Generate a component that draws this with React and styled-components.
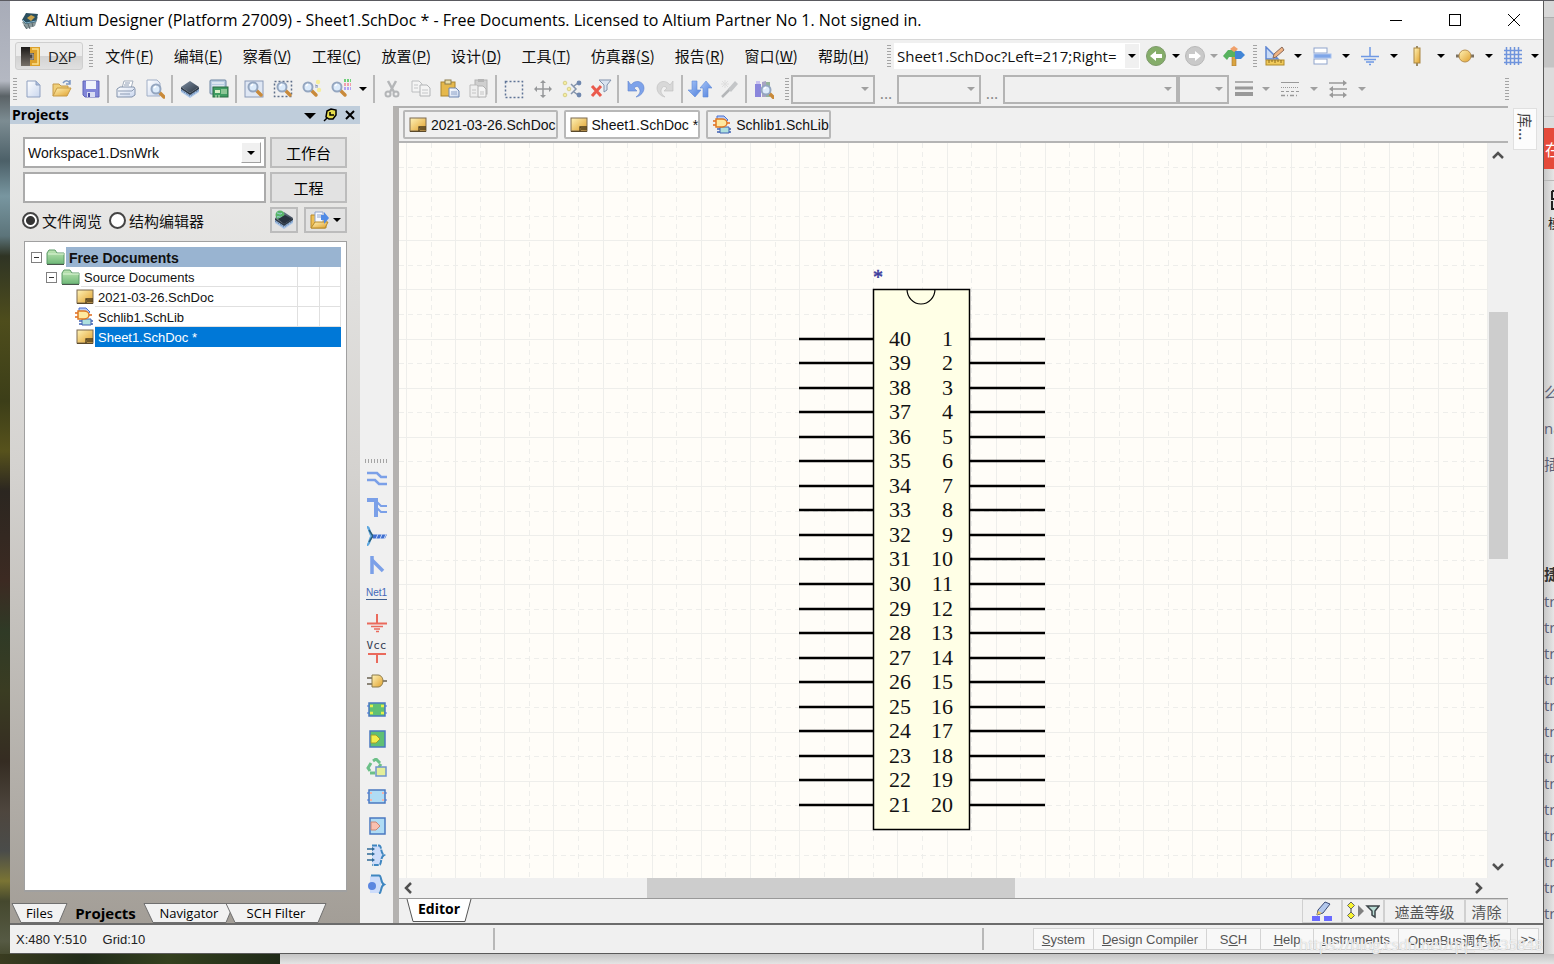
import React from "react";
import styled, { createGlobalStyle, css } from "styled-components";

const UI = '"Open Sans", "Noto Sans CJK SC", sans-serif';
const CJK = '"Noto Sans CJK SC", sans-serif';
const SANS = '"Liberation Sans", "Noto Sans CJK SC", sans-serif';

const GlobalStyle = createGlobalStyle`
  * { box-sizing: border-box; }
  body { margin: 0; background: #e6e6e6; font: 13px ${SANS}; color: #222; }
  button, input, select { font: inherit; color: inherit; margin: 0; border-radius: 0; }
  svg { display: block; flex: none; }
`;

/* ---------- icons ---------- */

const Svg = ({ w = 20, h = 20, children }) => (
  <svg width={w} height={h} viewBox={`0 0 ${w} ${h}`} fill="none" aria-hidden="true">
    {children}
  </svg>
);

const Defs = () => (
  <svg width="0" height="0" style={{ position: "absolute" }} aria-hidden="true">
    <defs>
      <linearGradient id="gold" x1="0" y1="0" x2="1" y2="1">
        <stop offset="0" stopColor="#fff3b8" /><stop offset="1" stopColor="#e0a02c" />
      </linearGradient>
      <linearGradient id="paper" x1="0" y1="0" x2="1" y2="1">
        <stop offset="0" stopColor="#ffffff" /><stop offset="1" stopColor="#c9d6ee" />
      </linearGradient>
      <linearGradient id="green" x1="0" y1="0" x2="0" y2="1">
        <stop offset="0" stopColor="#bfe6b4" /><stop offset="1" stopColor="#6fb878" />
      </linearGradient>
      <linearGradient id="blue" x1="0" y1="0" x2="1" y2="1">
        <stop offset="0" stopColor="#a9c6f7" /><stop offset="1" stopColor="#4f7fdc" />
      </linearGradient>
      <linearGradient id="chipTop" x1="0" y1="0" x2="1" y2="1">
        <stop offset="0" stopColor="#7d8ea2" /><stop offset="1" stopColor="#28323f" />
      </linearGradient>
      <linearGradient id="dark" x1="0" y1="0" x2="0" y2="1">
        <stop offset="0" stopColor="#1c1a18" /><stop offset="1" stopColor="#77716a" />
      </linearGradient>
    </defs>
  </svg>
);

const Lens = ({ x = 8, y = 8 }) => (
  <g>
    <path d={`M${x + 3} ${y + 3}l5 5`} stroke="#c98a3a" strokeWidth="3.5" strokeLinecap="round" />
    <circle cx={x} cy={y} r="4.5" fill="#dcebfb" stroke="#94a6c0" strokeWidth="2" />
    <path d={`M${x - 2} ${y - 1}l2-2`} stroke="#fff" strokeWidth="1.5" />
  </g>
);

const Chip = () => (
  <g>
    <path d="M1 9l9 6 9-6v4l-9 6-9-6z" fill="#a9c4e6" />
    <path d="M1 11l9 6 9-6" stroke="#5f7fa8" strokeDasharray="2 1" />
    <path d="M1 8l9-6 9 6-9 6z" fill="url(#chipTop)" />
    <path d="M1 8l9 6 9-6v2l-9 6-9-6z" fill="#2d3947" />
  </g>
);

const Sheet = () => (
  <Svg w={18} h={16}>
    <rect x="1" y="1" width="16" height="13" fill="url(#gold)" stroke="#7d6a50" />
    <path d="M10 14v-4h7M11 12h6" stroke="#4a3a1c" strokeWidth="1.3" />
    <path d="M1 14.5h16" stroke="#5b4a2c" />
  </Svg>
);

const Lib = () => (
  <Svg>
    <path d="M5 1h7l4 4-3 2H5z" fill="#b9cdf6" stroke="#4a6fce" />
    <path d="M1 6h3m-3 4h3m11-2h3" stroke="#e06a1c" strokeWidth="1.5" />
    <path d="M8 12h9v6H8z" fill="#aee0dd" stroke="#3f62b4" />
    <path d="M5 14h3m-3 3h3m9-3h2m-2 3h2" stroke="#3f62b4" strokeWidth="1.5" />
    <path d="M4 4h6c3 0 5 2 5 4s-2 4-5 4H4z" fill="#ffe9a0" stroke="#e07a22" strokeWidth="1.5" />
  </Svg>
);

const Folder = () => (
  <Svg w={19} h={18}>
    <path d="M1 16V5l2-3h6l2 3h7v11z" fill="url(#green)" stroke="#5c9a68" />
    <path d="M2 6h16" stroke="#def5d8" />
    <path d="M1 16.5h17" stroke="#49554c" />
  </Svg>
);

const icons = {
  app: <Svg><path d="M2 12l4 7 9-3 3-9z" fill="#8a9a9c" /><path d="M6 14l-4-4 4-7 12 1-2 8z" fill="#2b4f5f" /><path d="M4 15l3 4m1-5l2 5m2-6l1 4" stroke="#59656a" /><path d="M7 8l4-3 4 2-4 4z" fill="#c9a24a" /><path d="M3 10l3 3 10-2" stroke="#7fb0c8" /></Svg>,
  dxp: <Svg w={21} h={21}><path d="M10 1h10v19H10z" fill="#dca02a" /><path d="M12 3h6v15h-6" stroke="#fbe08a" strokeWidth="1.5" /><path d="M1 1h9v6h4v7h-4v6H1z" fill="url(#dark)" /><path d="M10 8h3v5h-3" stroke="#b8b0a4" strokeWidth="1.2" /></Svg>,
  new: <Svg><path d="M4 2h9l4 4v12H4z" fill="url(#paper)" stroke="#8fa0c0" /><path d="M13 2v4h4" fill="#a8badb" stroke="#8fa0c0" /></Svg>,
  open: <Svg><path d="M1 17V5h6l2 2h7v3" fill="#f0cf78" stroke="#c59a4a" /><path d="M1 17l4-8h14l-4 8z" fill="url(#gold)" stroke="#c79a45" /><path d="M11 4c2-3 5-3 7 0m0-3v4h-4" stroke="#7d98c4" strokeWidth="1.5" /></Svg>,
  save: <Svg><path d="M2 2h16v16H4l-2-2z" fill="#8186d8" stroke="#5f62b8" /><rect x="5" y="2" width="10" height="8" fill="#f0f3fb" /><rect x="6" y="13" width="8" height="5" fill="#d8dcf2" /><rect x="7" y="14" width="2" height="4" fill="#4a4ea8" /></Svg>,
  print: <Svg><path d="M6 9l2-7h9l-2 7z" fill="#fff" stroke="#a3aebd" /><path d="M1 10l3-2h14l1 2v6l-3 2H1z" fill="url(#paper)" stroke="#8292ab" /><path d="M2 12h14l2-2M4 15h10M9 4h5M8 6h5" stroke="#8c9bb3" /></Svg>,
  preview: <Svg><path d="M2 1h10l3 3v13H2z" fill="url(#paper)" stroke="#a0aec6" /><Lens x={11} y={10} /></Svg>,
  chip: <Svg><Chip /></Svg>,
  board: <Svg><rect x="1" y="1" width="16" height="14" rx="1" fill="#b9cde2" stroke="#6f87a3" /><path d="M3 4h12M3 7h12" stroke="#fff" /><rect x="4" y="8" width="15" height="10" fill="#3f9c62" stroke="#2a6b42" /><path d="M6 11h5v3H6z" fill="#d8efc8" /><path d="M13 10v5m2-5v5m2-5v5M7 16v3m3-3v3" stroke="#d8efc8" /></Svg>,
  zoomDoc: <Svg><rect x="1" y="2" width="18" height="16" fill="#dfe7f4" stroke="#8a9ab8" /><Lens x={9} y={8} /></Svg>,
  zoomSel: <Svg><rect x="1.5" y="2.5" width="17" height="15" stroke="#5f6f8a" strokeWidth="1.5" strokeDasharray="2 2" /><Lens x={9} y={8} /></Svg>,
  zoomYellow: <Svg><Lens x={6} y={8} /><circle cx="16" cy="3" r="2.2" fill="#f6ee9a" /><circle cx="17" cy="11" r="2.2" fill="#f6ee9a" /><path d="M13 6l3 1m-3 1h3" stroke="#8a9ab8" /></Svg>,
  zoomColor: <Svg><Lens x={6} y={8} /><path d="M13 1.500h7" stroke="#6fd07a" strokeWidth="3" strokeDasharray="2 1" /><path d="M13 5.500h7" stroke="#f0a0ac" strokeWidth="3" strokeDasharray="2 1" /><path d="M13 9.500h7" stroke="#b0a4f4" strokeWidth="3" strokeDasharray="2 1" /></Svg>,
  cut: <Svg><path d="M6 2l6 11M14 2L8 13" stroke="#b4b6b8" strokeWidth="2.5" /><circle cx="6" cy="15" r="2.5" stroke="#b4b6b8" strokeWidth="2" /><circle cx="14" cy="15" r="2.5" stroke="#b4b6b8" strokeWidth="2" /></Svg>,
  copy: <Svg><path d="M1 2h7l3 3v8H1z" fill="#f4f4f4" stroke="#bcbec0" /><path d="M9 6h7l3 3v8H9z" fill="#f4f4f4" stroke="#b2b4b6" /><path d="M3 6h4M3 9h4m4 2h6m-6 3h6" stroke="#c4c6c8" /></Svg>,
  paste: <Svg><rect x="1" y="3" width="14" height="14" fill="#e5b84c" stroke="#a8832e" /><rect x="5" y="1" width="6" height="4" fill="#e9dfae" stroke="#8a7a4a" /><path d="M9 9h7l3 3v6H9z" fill="url(#paper)" stroke="#6e86b0" /><path d="M11 13h6m-6 2h6" stroke="#8fa3c8" /></Svg>,
  pasteSpecial: <Svg><rect x="6" y="1" width="12" height="14" fill="#cfcfcf" stroke="#b2b2b2" /><path d="M9 0h6v3H9z" fill="#b5b5b5" /><path d="M1 6h7l3 3v9H1z" fill="#eee" stroke="#bbb" /><path d="M9 7h5l3 3v8H9z" fill="#f4f4f4" stroke="#b2b2b2" /><path d="M3 11h4m-4 3h4m4-1h4m-4 2h4" stroke="#c4c4c4" /></Svg>,
  select: <Svg><rect x="1.5" y="2.5" width="17" height="16" stroke="#5f7496" strokeWidth="1.5" strokeDasharray="2 2" /></Svg>,
  move: <Svg><path d="M10 3v14M3 10h14" stroke="#96989a" strokeWidth="1.5" /><path d="M10 1l3 3H7zM10 19l3-3H7zM1 10l3-3v6zM19 10l-3-3v6z" fill="#96989a" /></Svg>,
  deselect: <Svg><path d="M9 5l5 5-5 5M12 7l4-3M12 13l4 3" stroke="#8494ac" strokeWidth="1.5" /><g fill="#f4eda0" stroke="#d8d08a"><circle cx="3" cy="4" r="1.8" /><circle cx="7" cy="10" r="1.8" /><circle cx="3" cy="16" r="1.8" /></g><g fill="#6f87ae"><circle cx="17" cy="4" r="2.4" /><circle cx="17" cy="16" r="2.4" /></g></Svg>,
  clear: <Svg w={22}><path d="M2 7l9 10M11 7L2 17" stroke="#ea5a4c" strokeWidth="3" /><path d="M9 1h12l-4 5v5l-3 2V6z" fill="#dbe4f0" stroke="#8292ac" /></Svg>,
  undo: <Svg><path d="M5 6c4-6 13-4 13 3 0 4-3 8-8 9 4-3 5-6 3-9-1-2-3-2-5 0l3 3H2V2z" fill="#7da2ea" stroke="#5f83cc" strokeWidth=".6" /></Svg>,
  redo: <Svg><path d="M15 6C11 0 2 2 2 9c0 4 3 8 8 9-4-3-5-6-3-9 1-2 3-2 5 0l-3 3h9V2z" fill="#d8d8d8" stroke="#bdbdbd" strokeWidth=".6" /></Svg>,
  upDown: <Svg w={24}><path d="M4 2h5v9h4l-6 7-7-7h4z" fill="url(#blue)" stroke="#5f8ad8" strokeWidth=".6" /><path d="M15 18h5V9h4l-6-7-6 7h3z" fill="url(#blue)" stroke="#5f8ad8" strokeWidth=".6" /></Svg>,
  wand: <Svg><path d="M3 18L12 9" stroke="#b4b6b8" strokeWidth="2.5" /><path d="M9 10l7-8 3 3-7 8z" fill="#c4c6c8" /><path d="M6 1v8M2 5h8M3 2l6 6M9 2L3 8" stroke="#dedede" /></Svg>,
  books: <Svg><path d="M1 5h6v13H1z" fill="#8a86dc" /><path d="M2 2h4v3H2z" fill="#c9c2f0" /><path d="M8 3l4-1v16H8z" fill="#a8a4c4" /><path d="M12 3h4v15h-4z" fill="#94b49a" /><Lens x={12} y={11} /></Svg>,
  width: <Svg><path d="M1 3h18" stroke="#999" strokeWidth="1.5" /><path d="M1 9h18" stroke="#999" strokeWidth="3" /><path d="M1 15h18" stroke="#999" strokeWidth="4" /></Svg>,
  style: <Svg><path d="M1 3.500h18" stroke="#999" /><path d="M1 8.500h18" stroke="#999" strokeDasharray="1 1" /><path d="M1 12.500h18" stroke="#999" strokeDasharray="3 2" /><path d="M1 16.500h18" stroke="#999" strokeDasharray="4 2 1 2" strokeWidth="1.5" /></Svg>,
  arrows: <Svg><path d="M1 4h15M4 10h15M3 16h14" stroke="#999" strokeWidth="1.5" /><path d="M15 1l4 3-4 3zM5 7l-4 3 4 3zM5 13l-4 3 4 3zM15 13l4 3-4 3z" fill="#999" /></Svg>,
  back: <Svg><circle cx="10" cy="10" r="9.5" fill="#85ad6a" stroke="#7d9a6a" /><path d="M4 10l6-5v3h6v4h-6v3z" fill="#fff" /></Svg>,
  forward: <Svg><circle cx="10" cy="10" r="9.5" fill="#c9c9c9" stroke="#b8b8b8" /><path d="M16 10l-6-5v3H4v4h6v3z" fill="#fff" /></Svg>,
  tree: <Svg w={22}><path d="M9 4h4v16H9z" fill="#d9a441" stroke="#a9772c" strokeWidth=".6" /><path d="M0 10l5-6h7v7H6l-2 3z" fill="#57b25e" /><path d="M22 9l-4-4h-6v8h6z" fill="#4185d6" /><path d="M7 3l4-3 4 3-4 3z" fill="#f0a06a" /></Svg>,
  ruler: <Svg><path d="M1 1l12 12H1z" fill="#c8daf6" stroke="#5f86d2" strokeWidth="1.5" /><path d="M8 12l1-4 8-7 2 3-8 7z" fill="#f0b484" stroke="#8a6a5a" /><rect x="1" y="14" width="18" height="5" fill="#f0c95a" stroke="#b08a2a" /><path d="M4 14v3m3-3v2m3-2v3m3-3v2m3-2v3" stroke="#8a6a1c" /></Svg>,
  align: <Svg><rect x="2" y="2" width="13" height="5" fill="#fff" stroke="#8fa4cc" /><rect x="2" y="13" width="13" height="5" fill="#fff" stroke="#8fa4cc" /><rect x="2" y="8" width="17" height="4" fill="#7fa6e8" stroke="#a9c2ee" /></Svg>,
  ground: <Svg><path d="M10 1v9M1 10.500h18M4 13.500h12M6 16h8M9 18.500h2" stroke="#6e98e4" strokeWidth="1.5" /></Svg>,
  resistor: <Svg><path d="M10 0v20" stroke="#7d6a3a" strokeWidth="1.5" /><rect x="7" y="2" width="6" height="15" fill="url(#gold)" stroke="#a98642" /></Svg>,
  node: <Svg><path d="M1 10h18" stroke="#7a7060" strokeWidth="3" /><circle cx="10" cy="10" r="6" fill="url(#gold)" stroke="#b89050" /></Svg>,
  grid: <Svg><path d="M3.500 1v18M7.500 1v18M11.500 1v18M15.500 1v18M1 4.500h18M1 8.500h18M1 12.500h18M1 16.500h18" stroke="#6f94dc" strokeWidth="1.5" /></Svg>,
  pin: <Svg w={14} h={14}><path d="M1 13l4-4" stroke="#000" strokeWidth="1.5" /><path d="M4 3l4-2 5 1v5l-3 4H6L3 9z" fill="#e6dc4c" stroke="#000" strokeWidth="1.5" /><path d="M7 4v3h4" stroke="#000" strokeWidth="1.5" /></Svg>,
  close: <Svg w={12} h={12}><path d="M2 2l8 8M10 2l-8 8" stroke="#000" strokeWidth="2" /></Svg>,
  chipGlobe: <Svg><Chip /><circle cx="6" cy="5" r="4.5" fill="#58b468" /><path d="M3 3c2 0 3 2 5 0M3 7c2-1 3 1 5 0" stroke="#a8d4f0" /><path d="M4 9l7-4 7 4-8 5z" fill="#28323f" /></Svg>,
  folderDoc: <Svg><path d="M1 18V5h5l2 2h8v11z" fill="#eebf55" stroke="#b88a2a" /><path d="M5 2h8v11H5z" fill="#f6f9ff" stroke="#8fa4cc" /><path d="M7 5h5M7 7h5" stroke="#8fa4cc" /><path d="M1 18l4-6h13l-3 6z" fill="url(#gold)" stroke="#b88a2a" /><path d="M11 5h3V2l5 6-5 6v-4h-3z" fill="#4f8ae6" /></Svg>,
  wire: <Svg w={22}><path d="M1 5h10l4 4h6M1 12h8l4 4h8" stroke="#7ba0e8" strokeWidth="2.5" /></Svg>,
  bus: <Svg w={22}><path d="M1 3h9v17" stroke="#7ba0e8" strokeWidth="4" /><path d="M11 5l4 4h6M11 11l4 4h6" stroke="#7ba0e8" strokeWidth="2" /></Svg>,
  harness: <Svg w={22}><path d="M1 1c3 0 2 7 5 9-3 2-2 9-5 9" stroke="#5fa8e0" strokeWidth="2.5" /><path d="M3 4l4 6-4 6" stroke="#2b5f7a" strokeWidth="1.5" /><path d="M7 8.500h14l-2 4H7z" fill="#3f6fd0" /><path d="M12 8l-2 5m6-5l-2 5m6-5l-2 5" stroke="#c8d8f8" /></Svg>,
  busEntry: <Svg w={22}><path d="M6 1v18" stroke="#7ba0e8" strokeWidth="3.500" /><path d="M6 5l11 11" stroke="#7ba0e8" strokeWidth="3.500" /></Svg>,
  gnd: <Svg w={22}><path d="M11 1v9M1 10.500h20" stroke="#ea6a5c" strokeWidth="2" /><path d="M5 13.500h12M8 16h6M10 18.500h3" stroke="#ea6a5c" strokeWidth="1.5" /></Svg>,
  part: <Svg w={22}><path d="M1 7h6M1 13h6M15 10h6" stroke="#6a6250" strokeWidth="1.5" /><path d="M6 4h6c3 0 5 3 5 6s-2 6-5 6H6z" fill="url(#gold)" stroke="#8a7a4c" /></Svg>,
  sheetSym: <Svg w={22}><path d="M1 6h20M1 13h20" stroke="#7c9be8" strokeWidth="1.5" /><rect x="3" y="3" width="16" height="13" fill="#5fc074" stroke="#4a78c0" strokeWidth="1.5" /><path d="M4 6h3M4 13h3m8-7h3m-3 7h3" stroke="#e6ee4c" strokeWidth="2.5" /></Svg>,
  sheetEntry: <Svg w={22}><rect x="4" y="2" width="15" height="16" fill="#5fc074" stroke="#4a78c0" strokeWidth="1.5" /><path d="M5 6h5l4 4-4 4H5z" fill="#f2ee4c" stroke="#a0a02c" /></Svg>,
  recycle: <Svg w={22}><path d="M4 13l-2-3 3-5M7 3l3-2 4 4M13 9l2-3" stroke="#6cc088" strokeWidth="3" /><path d="M4 15h5" stroke="#6cc088" strokeWidth="3" /><rect x="10" y="9" width="10" height="9" fill="#e4ee9a" stroke="#6e94cc" strokeWidth="1.5" /></Svg>,
  device: <Svg w={22}><path d="M1 6h20M1 13h20" stroke="#7c9be8" strokeWidth="1.5" /><rect x="3" y="3" width="16" height="13" fill="#b0dcf4" stroke="#4a78c0" strokeWidth="1.5" /><path d="M4 6h2M4 13h2m10-7h2m-2 7h2" stroke="#f4b4a8" strokeWidth="2" /></Svg>,
  port: <Svg w={22}><rect x="4" y="2" width="15" height="16" fill="#b0dcf4" stroke="#4a78c0" strokeWidth="1.5" /><path d="M5 6h5l4 4-4 4H5z" fill="#f9c0b0" stroke="#c88878" /></Svg>,
  connector: <Svg w={22} h={22}><path d="M6 2h8l2 8-2 10H6z" fill="#cddcfa" /><path d="M1 5h6M1 10h6M1 16h6" stroke="#2f6a98" strokeWidth="1.5" /><path d="M6 3l3 2-3 2zM6 8l3 2-3 2zM6 14l3 2-3 2z" fill="#2f6a98" /><path d="M6 1.500h7c3 0 1 7 5 9.500-4 2-2 10-5 10H6" stroke="#3f86c0" strokeWidth="2" strokeDasharray="5 1" /></Svg>,
  connEntry: <Svg w={22}><path d="M4 2h9l2 8-2 9H4z" fill="#cddcfa" /><path d="M5 1.500h8c3 0 1 7 5 9-4 2-2 8-5 9" stroke="#3f86c0" strokeWidth="2" /><circle cx="6" cy="12" r="4" fill="#5a86e0" /></Svg>,
  pencil: <Svg w={22}><path d="M7 9l7-8 5 2-7 9-6 2z" fill="#b4c8ec" stroke="#3c4c78" /><path d="M6 14l1-4 4 2z" fill="#f0d060" /><path d="M1 15h8v5H1zM13 15h8v5h-8z" fill="#6a6aff" /></Svg>,
  mask: <Svg w={34}><path d="M5 6v8" stroke="#444" /><path d="M5 1l3.500 3.500L5 8 1.500 4.500zM5 11l3.500 3.500L5 18l-3.500-3.500z" fill="#f8f430" stroke="#666" /><path d="M12 4l6 6-6 6z" fill="#808080" /><path d="M21 5h12l-4 5v6l-3-2v-4z" fill="#b8dcd4" stroke="#3c4448" strokeWidth="1.5" /></Svg>,
};

const Caret = styled.span`
  flex: none;
  width: 0;
  height: 0;
  border: 4px solid transparent;
  border-top-color: ${(p) => (p.$muted ? "#a0a0a0" : "#000")};
  border-bottom-width: 0;
`;

/* ---------- desktop behind the window ---------- */

const Desktop = styled.div`
  display: grid;
  grid-template-columns: 10px minmax(0, 1fr) 10px;
  grid-template-rows: 1fr 10px;
  min-height: 100vh;
  padding-top: 1px;
  overflow: hidden;
  background: #5a5a60;
`;

const Wallpaper = styled.div`
  background: linear-gradient(
    #a8acb8 0, #b4b8c2 80px, #5a6266 95px, #7c8c92 120px, #4c6068 160px,
    #7896a0 195px, #5c747a 235px, #2f3424 255px, #4e4d1c 320px, #3c3e18 400px,
    #57521c 450px, #2b2620 490px, #3c2a22 580px, #2f3a26 630px, #3a3c22 690px,
    #352c22 760px, #4e463e 810px, #4a4c4a 850px, #7a7434 880px, #45482e 900px,
    #565a44 940px, #3c4022 963px
  );
`;

const DesktopFoot = styled.div`
  grid-column: 1 / -1;
  display: flex;
  background: linear-gradient(#c4c4c4, #e4e4e4);
`;

const FootImage = styled.div`
  width: 280px;
  background: linear-gradient(90deg, #3a3c20, #222c1a 30%, #34401e 60%, #202a18);
`;

const Behind = styled.aside`
  overflow: hidden;
  background: linear-gradient(90deg, #c8c8c8, #e6e6e6);
  font: 15px ${UI};
  color: #5c6076;
  white-space: nowrap;
`;

const BehindTop = styled.div`
  height: 127px;
  background: linear-gradient(#d8d8d8 16px, #999 16px, #c4c4c4 17px, #c4c4c4 66px, #dcdcdc 67px, #dcdcdc 115px, #b8b8b8 115px, #dcdcdc 116px);
`;

const BehindButton = styled.button`
  display: block;
  width: 40px;
  height: 41px;
  border: 0;
  padding: 0 1px;
  background: #e54a3a;
  color: #fff;
  font: 16px ${CJK};
  text-align: left;
`;

const BehindTool = styled.div`
  height: 194px;
  margin-top: 11px;
  padding: 8px 0 0 4px;
  border-top: 1px solid #b8b8b8;
  color: #222;
  font: 13px ${CJK};
`;

const BehindLink = styled.a`
  display: block;
  height: ${(p) => p.$h}px;
  line-height: ${(p) => p.$h}px;
  color: ${(p) => (p.$bold ? "#333" : "#5c6076")};
  font-weight: ${(p) => (p.$bold ? 700 : 400)};
  text-decoration: none;
`;

/* ---------- window ---------- */

const Window = styled.main`
  position: relative;
  display: flex;
  flex-direction: column;
  background: #f0f0f0;
  border-right: 1px solid #5a5a5a;
  border-bottom: 1px solid #5a5a5a;
`;

const TitleBar = styled.header`
  display: flex;
  align-items: center;
  gap: 5px;
  height: 39px;
  padding: 0 2px 0 10px;
  background: #fff;
  border-bottom: 1px solid #d8d8d8;
`;

const Title = styled.h1`
  flex: 1;
  margin: 0;
  font: 400 16px ${UI};
  color: #000;
  white-space: nowrap;
`;

const CaptionButton = styled.button`
  display: flex;
  align-items: center;
  justify-content: center;
  width: 54px;
  height: 38px;
  padding: 0;
  border: 0;
  background: none;
`;

const Row = styled.div`
  display: flex;
  align-items: center;
  height: 33px;
  padding: 0 0 1px 3px;
`;

const Grip = styled.span`
  flex: none;
  width: ${(p) => (p.$wide ? 23 : 4)}px;
  height: ${(p) => (p.$wide ? 4 : 22)}px;
  margin: ${(p) => p.$m || "0"};
  background: repeating-linear-gradient(${(p) => (p.$wide ? "90deg" : "180deg")}, #a4a4a4 0 1px, #f0f0f0 1px 3px);
`;

const DxpButton = styled.button`
  display: flex;
  align-items: center;
  gap: 7px;
  width: 73px;
  height: 28px;
  margin-left: 2px;
  padding: 0 4px;
  border: 1px solid #cfcfcf;
  border-radius: 3px;
  background: linear-gradient(#ececec 50%, #d2d2d2 50%, #e0e0e0);
  font: 15px ${UI};
`;

const MenuButton = styled.button`
  padding: 0 10px;
  border: 0;
  background: none;
  font: 15px/24px ${CJK};
  color: #111;
  white-space: nowrap;
`;

const AddressWrap = styled.span`
  position: relative;
  flex: none;
  width: 246px;
  height: 26px;
`;

const PlainSelect = styled.select`
  width: 100%;
  height: 100%;
  appearance: none;
  border: ${(p) => (p.$line ? `2px solid ${p.$line}` : "0")};
  padding: 0 18px 0 3px;
  background: ${(p) => p.$bg || "#fff"};
  font: ${(p) => p.$size || 15}px ${(p) => (p.$sans ? SANS : UI)};
  color: #111;
  opacity: 1;
`;

const SelectCaret = styled.span`
  position: absolute;
  top: ${(p) => p.$inset || 1}px;
  right: ${(p) => p.$inset || 1}px;
  bottom: ${(p) => p.$inset || 1}px;
  display: flex;
  align-items: center;
  justify-content: center;
  width: ${(p) => (p.$raised ? 20 : 14)}px;
  background: #f0f0f0;
  pointer-events: none;
  ${(p) => p.$raised && css`border: 1px solid; border-color: #fff #a0a0a0 #a0a0a0 #fff; background: #f0f0f0;`}
`;

const ToolButton = styled.button`
  display: flex;
  flex: none;
  align-items: center;
  justify-content: center;
  width: ${(p) => p.$w || 29}px;
  height: 28px;
  padding: 0;
  border: 0;
  background: none;
`;

const Separator = styled.span`
  flex: none;
  width: 2px;
  height: 28px;
  margin: 0 2px;
  background: #b8b8b8;
`;

const Dots = styled.span`
  width: 22px;
  align-self: flex-end;
  padding-bottom: 2px;
  text-align: center;
  color: #888;
  font: 16px/20px ${UI};
`;

const ComboWrap = styled.span`
  position: relative;
  flex: none;
  width: ${(p) => p.$w}px;
  height: 29px;
`;

const Spring = styled.span`
  flex: ${(p) => p.$grow || 1};
`;

const Body = styled.div`
  display: flex;
  flex: 1;
  min-height: 0;
`;

/* ---------- projects panel ---------- */

const Panel = styled.section`
  display: flex;
  flex: none;
  flex-direction: column;
  width: 350px;
  background: linear-gradient(#eeeeed, #d4d2cf 45%, #a39e97);
`;

const PanelHead = styled.header`
  display: flex;
  align-items: center;
  gap: 7px;
  height: 18px;
  padding: 0 4px 0 2px;
  background: #bfcddb;
`;

const PanelTitle = styled.h2`
  flex: 1;
  margin: 0;
  font: 700 14px/18px ${UI};
  color: #000;
`;

const IconButton = styled.button`
  display: flex;
  padding: 0;
  border: 0;
  background: none;
`;

const PanelForm = styled.div`
  display: grid;
  grid-template-columns: minmax(0, 1fr) 77px;
  gap: 4px;
  padding: 13px 13px 0;
`;

const FieldWrap = styled.span`
  position: relative;
  height: 31px;
`;

const TextField = styled.input`
  width: 100%;
  height: 31px;
  border: 2px solid #ababab;
  padding: 0 4px;
  background: #fff;
`;

const PushButton = styled.button`
  display: flex;
  align-items: center;
  justify-content: center;
  gap: 3px;
  width: ${(p) => (p.$w ? `${p.$w}px` : "auto")};
  height: ${(p) => p.$h || 31}px;
  padding: 0;
  border: 2px solid #bcbcbc;
  background: #e2e2e2;
  font: 15px ${CJK};
  color: #000;
`;

const ViewRow = styled.div`
  display: flex;
  align-items: center;
  gap: 6px;
  height: 26px;
  margin: 4px 13px 8px 12px;
`;

const RadioLabel = styled.label`
  display: flex;
  align-items: center;
  gap: 3px;
  margin-right: 1px;
  font: 15px ${CJK};
  color: #111;
`;

const Radio = styled.input`
  appearance: none;
  width: 17px;
  height: 17px;
  margin: 0;
  border: 2px solid #444;
  border-radius: 50%;
  background: #fff;
  &:checked {
    background: radial-gradient(#333 0 4px, #fff 5px);
  }
`;

const Tree = styled.ul`
  flex: 1;
  min-height: 200px;
  margin: 0 13px 0 14px;
  padding: 5px 5px 0 6px;
  border: 2px solid #a0a0a0;
  border-width: 1px 1px 2px 1px;
  background: #fff;
  list-style: none;
`;

const TreeRow = styled.li`
  display: flex;
  align-items: center;
  height: 20px;
  padding-left: ${(p) => p.$indent}px;
  svg { margin-right: 1px; }
`;

const TreeLabel = styled.span`
  display: flex;
  flex: 1;
  height: 20px;
  padding-left: 3px;
  line-height: 22px;
  font-size: ${(p) => (p.$kind === "root" ? 14 : 13)}px;
  font-weight: ${(p) => (p.$kind === "root" ? 700 : 400)};
  color: ${(p) => (p.$kind === "selected" ? "#fff" : "#111")};
  background: ${(p) => ({ root: "#99b4d1", selected: "#0078d7" }[p.$kind] || "none")};
  border-bottom: ${(p) => (p.$kind ? "0" : "1px solid #e0e0e0")};
`;

const TreeCell = styled.span`
  width: 22px;
  border: solid #e0e0e0;
  border-width: 0 0 0 1px;
  &:last-child { border-right-width: 1px; }
`;

const Expander = styled.button`
  position: relative;
  width: 11px;
  height: 11px;
  margin-right: 4px;
  padding: 0;
  border: 1px solid #808080;
  background: linear-gradient(#333, #333) center / 5px 1px no-repeat #fff;
`;

const PanelTabs = styled.nav`
  display: flex;
  height: 20px;
  margin-top: 11px;
  padding-left: 1px;
`;

const SlantTab = styled.button`
  position: relative;
  width: ${(p) => p.$w}px;
  height: 20px;
  margin-right: -10px;
  padding: 0;
  border: 0;
  background: none;
  font: ${(p) => (p.$active ? 700 : 400)} ${(p) => p.$size || 13}px/18px ${UI};
  color: #000;
  svg { position: absolute; inset: 0; }
  span { position: relative; }
`;

/* ---------- wiring strip ---------- */

const WiringBar = styled.div`
  display: flex;
  flex: none;
  flex-direction: column;
  align-items: center;
  justify-content: flex-end;
  width: 33px;
  padding-bottom: 25px;
`;

const WiringButton = styled.button`
  display: flex;
  flex: none;
  align-items: center;
  justify-content: center;
  width: 30px;
  height: 29px;
  padding: 0;
  border: 0;
  background: none;
`;

const NetLabel = styled.span`
  border-bottom: 1px solid #3f5f90;
  font: 10px/12px ${SANS};
  color: #4468b8;
`;

const VccLabel = styled.span`
  display: flex;
  flex-direction: column;
  align-items: center;
  font: 11px/12px "DejaVu Sans Mono", monospace;
  color: #333a50;
`;

/* ---------- document area ---------- */

const Documents = styled.section`
  display: flex;
  flex: 1;
  flex-direction: column;
  min-width: 0;
  border-left: 6px solid #b4b2b0;
  border-top: 2px solid #b0b0b0;
`;

const DocTabs = styled.nav`
  display: flex;
  align-items: center;
  gap: 6px;
  height: 35px;
  padding-left: 4px;
  border-bottom: 2px solid #b4b4b4;
`;

const DocTab = styled.button`
  display: flex;
  flex: none;
  align-items: center;
  gap: 4px;
  height: 29px;
  padding: 0 0 0 4px;
  border: 2px solid #b8b8b8;
  border-radius: 2px;
  background: ${(p) => (p.$active ? "#fff" : "#f0f0f0")};
  font: 14px ${SANS};
  color: #111;
  white-space: nowrap;
`;

const CanvasRow = styled.div`
  display: flex;
  flex: 1;
`;

const Canvas = styled.svg`
  flex: 1;
  min-width: 0;
  min-height: 700px;
  height: auto;
  background: #fffdf8;
`;

const ScrollBar = styled.div`
  display: flex;
  flex: none;
  flex-direction: ${(p) => (p.$horizontal ? "row" : "column")};
  ${(p) => (p.$horizontal ? "height: 20px; margin-right: 20px;" : "width: 20px; padding: 2px 0;")}
`;

const ScrollButton = styled.button`
  display: flex;
  align-items: center;
  justify-content: center;
  width: 20px;
  height: 20px;
  padding: 0;
  border: 0;
  background: none;
`;

const Thumb = styled.span`
  flex: ${(p) => p.$grow};
  margin: ${(p) => (p.$horizontal ? "0" : "0 0 0 1px")};
  background: #cdcdcd;
`;

const EditorRow = styled.div`
  display: flex;
  height: 25px;
  padding-left: 7px;
  border-top: 1px solid #999;
`;

const MaskButton = styled.button`
  display: flex;
  align-items: center;
  justify-content: center;
  width: ${(p) => p.$w}px;
  height: 24px;
  padding: 0;
  border: 1px solid #d0d0d0;
  background: #f0f0f0;
  font: 15px ${CJK};
  color: #555;
`;

const SideStrip = styled.aside`
  flex: none;
  width: 35px;
  padding: 2px 5px;
`;

const SideTab = styled.button`
  width: 24px;
  height: 42px;
  padding: 4px 0;
  border: 1px solid #e0e0e0;
  background: #fcfcfc;
  font: 15px/22px ${CJK};
  color: #444;
  writing-mode: vertical-rl;
  text-orientation: sideways;
  text-align: left;
`;

/* ---------- status bar ---------- */

const StatusBar = styled.footer`
  display: flex;
  align-items: center;
  height: 30px;
  padding: 0 4px 0 6px;
  border-top: 2px solid #6c6c6c;
  color: #222;
`;

const StatusText = styled.span`
  margin-right: 16px;
  font-size: 13px;
  white-space: pre;
`;

const StatusRule = styled.span`
  width: 2px;
  height: 22px;
  margin-right: ${(p) => p.$gap}px;
  background: #b8b8b8;
`;

const StatusButton = styled.button`
  width: ${(p) => p.$w}px;
  height: 22px;
  margin-left: ${(p) => (p.$apart ? 6 : -1)}px;
  padding: 0;
  border: 1px solid #d4d4d4;
  background: #f8f8f8;
  color: #555;
  font-size: 13px;
  white-space: nowrap;
`;

const Watermark = styled.span`
  position: absolute;
  right: 0;
  bottom: 0;
  font: 15px/18px ${UI};
  color: rgba(255, 255, 255, 0.8);
  text-shadow: 0 0 1px #aaa;
  pointer-events: none;
`;

/* ---------- data ---------- */

const menus = [
  ["文件", "F"], ["编辑", "E"], ["察看", "V"], ["工程", "C"], ["放置", "P"], ["设计", "D"],
  ["工具", "T"], ["仿真器", "S"], ["报告", "R"], ["窗口", "W"], ["帮助", "H"],
];

const tools = [
  "new", "open", "save", "|", "print", "preview", "|", "chip", "board", "|",
  "zoomDoc", "zoomSel", "zoomYellow", "zoomColor", "v", "|", "cut", "copy", "paste", "pasteSpecial", "|",
  "select", "move", "deselect", "clear", "|", "undo", "redo", "|", "upDown", "wand", "|", "books",
];

const wiring = [
  "wire", "bus", "harness", "busEntry", "net", "gnd", "vcc", "part",
  "sheetSym", "sheetEntry", "recycle", "device", "port", "connector", "connEntry",
];

const panelTabs = [
  { name: "Files", w: 57 }, { name: "Projects", w: 95, active: true },
  { name: "Navigator", w: 92 }, { name: "SCH Filter", w: 102 },
];

const statusButtons = [
  ["", "S", "ystem", 61], ["", "D", "esign Compiler", 114], ["S", "C", "H", 55],
  ["", "H", "elp", 54], ["", "I", "nstruments", 86],
];

const GRID = 49.14;

function Schematic() {
  const lines = Array.from({ length: 120 }, (_, i) => i);
  const pins = Array.from({ length: 20 }, (_, i) => i);
  return (
    <Canvas role="img" aria-label="Schematic sheet">
      {lines.map((i) => {
        const x = Math.round(7 + (i * GRID) / 2) + 0.5;
        const y = Math.round((i * GRID) / 2) - 0.5;
        const dash = i % 2 === 1 ? "5 4" : undefined;
        return (
          <g key={i} stroke="#eeeeeb">
            <line x1={x} y1="0" x2={x} y2="100%" strokeDasharray={dash} />
            <line x1="0" y1={y} x2="100%" y2={y} strokeDasharray={dash} />
          </g>
        );
      })}
      <rect x="474.5" y="146.5" width="96" height="540" fill="#ffffe6" stroke="#000" strokeWidth="1.5" />
      <path d="M508 146a14 15 0 0 0 28 0" fill="none" stroke="#000" strokeWidth="1.2" />
      <g fontFamily='"Liberation Serif", serif' fontSize="22" fill="#111">
        {pins.map((i) => {
          const y = Math.round(195.5 + i * 24.55);
          return (
            <g key={i}>
              <path d={`M400 ${y}H474M571 ${y}H646`} stroke="#000" strokeWidth="2.5" />
              <text x="490" y={y + 7}>{40 - i}</text>
              <text x="554" y={y + 7} textAnchor="end">{i + 1}</text>
            </g>
          );
        })}
      </g>
      <text x="474" y="141" fontFamily='"Liberation Serif", serif' fontSize="20" fill="#3c3c9c" stroke="#3c3c9c" strokeWidth=".5">*</text>
    </Canvas>
  );
}

const arrowPaths = {
  up: "M1 9l5-5 5 5", down: "M1 4l5 5 5-5", left: "M8 1L3 6l5 5", right: "M4 1l5 5-5 5",
};
const Arrow = ({ dir }) => (
  <ScrollButton aria-label={`Scroll ${dir}`}>
    <Svg w={12} h={12}><path d={arrowPaths[dir]} stroke="#505050" strokeWidth="2.5" /></Svg>
  </ScrollButton>
);

const Combo = ({ w, label }) => (
  <ComboWrap $w={w}>
    <PlainSelect $line="#b4b4b4" $bg="#f0f0f0" aria-label={label} disabled><option /></PlainSelect>
    <SelectCaret $inset={3}><Caret $muted /></SelectCaret>
  </ComboWrap>
);

const Tool = ({ name, w }) => <ToolButton $w={w} aria-label={name}>{icons[name]}</ToolButton>;
const Drop = ({ w = 16, muted }) => (
  <ToolButton $w={w} aria-label="More"><Caret $muted={muted} /></ToolButton>
);

function Wiring({ name }) {
  let mark = icons[name];
  if (name === "net") mark = <NetLabel>Net1</NetLabel>;
  if (name === "vcc")
    mark = (
      <VccLabel>
        Vcc
        <Svg w={20} h={12}><path d="M1 2h18M10 2v9" stroke="#ea6a5c" strokeWidth="2" /></Svg>
      </VccLabel>
    );
  return <WiringButton aria-label={name}>{mark}</WiringButton>;
}

export default function App() {
  return (
    <Desktop>
      <GlobalStyle />
      <Defs />
      <Wallpaper />
      <Window>
        <TitleBar>
          {icons.app}
          <Title>Altium Designer (Platform 27009) - Sheet1.SchDoc * - Free Documents. Licensed to Altium Partner No 1. Not signed in.</Title>
          <CaptionButton aria-label="Minimize"><Svg w={14} h={14}><path d="M1 7.500h12" stroke="#000" /></Svg></CaptionButton>
          <CaptionButton aria-label="Maximize"><Svg w={14} h={14}><rect x="1.5" y="1.5" width="11" height="11" stroke="#000" /></Svg></CaptionButton>
          <CaptionButton aria-label="Close"><Svg w={14} h={14}><path d="M1 1l12 12M13 1L1 13" stroke="#000" /></Svg></CaptionButton>
        </TitleBar>

        <Row>
          <DxpButton>{icons.dxp}<span>D<u>X</u>P</span></DxpButton>
          <Grip $m="0 2px 0 6px" />
          {menus.map(([name, key]) => (
            <MenuButton key={key}>{name}(<u>{key}</u>)</MenuButton>
          ))}
          <Grip $m="0 3px 0 8px" />
          <AddressWrap>
            <PlainSelect aria-label="Address"><option>Sheet1.SchDoc?Left=217;Right=</option></PlainSelect>
            <SelectCaret><Caret /></SelectCaret>
          </AddressWrap>
          <Tool name="back" w={32} /><Drop w={8} />
          <Tool name="forward" w={30} /><Drop w={8} muted />
          <Tool name="tree" w={32} />
          <Grip $m="0 4px 0 3px" />
          <Tool name="ruler" w={27} /><Drop w={20} />
          <Tool name="align" w={28} /><Drop w={20} />
          <Tool name="ground" w={28} /><Drop w={19} />
          <Tool name="resistor" w={28} /><Drop w={20} />
          <Tool name="node" w={28} /><Drop w={20} />
          <Tool name="grid" w={28} /><Drop w={16} />
        </Row>

        <Row>
          <Grip $m="0 1px 0 0" />
          {tools.map((name, i) =>
            name === "|" ? <Separator key={i} /> : name === "v" ? <Drop key={i} /> : <Tool key={i} name={name} />
          )}
          <Grip $m="0 2px 0 7px" />
          <Combo w={84} label="Color" /><Dots>...</Dots>
          <Combo w={84} label="Area color" /><Dots>...</Dots>
          <Combo w={175} label="Font" />
          <Combo w={51} label="Font size" />
          <Tool name="width" /><Drop muted />
          <Tool name="style" w={32} /><Drop muted />
          <Tool name="arrows" w={32} /><Drop muted />
          <Spring />
          <Grip $m="0 34px 0 0" />
        </Row>

        <Body>
          <Panel>
            <PanelHead>
              <PanelTitle>Projects</PanelTitle>
              <IconButton aria-label="Panel menu"><Svg w={12} h={12}><path d="M0 4h12L6 10z" fill="#000" /></Svg></IconButton>
              <IconButton aria-label="Pin panel">{icons.pin}</IconButton>
              <IconButton aria-label="Close panel">{icons.close}</IconButton>
            </PanelHead>
            <PanelForm>
              <FieldWrap>
                <PlainSelect $line="#ababab" $sans $size={14} aria-label="Workspace"><option>Workspace1.DsnWrk</option></PlainSelect>
                <SelectCaret $inset={5} $raised><Caret /></SelectCaret>
              </FieldWrap>
              <PushButton>工作台</PushButton>
              <TextField aria-label="Project" />
              <PushButton>工程</PushButton>
            </PanelForm>
            <ViewRow>
              <RadioLabel><Radio type="radio" name="view" defaultChecked />文件阅览</RadioLabel>
              <RadioLabel><Radio type="radio" name="view" />结构编辑器</RadioLabel>
              <Spring />
              <PushButton $w={28} $h={26} aria-label="Compile">{icons.chipGlobe}</PushButton>
              <PushButton $w={43} $h={26} aria-label="Open project">{icons.folderDoc}<Caret /></PushButton>
            </ViewRow>
            <Tree>
              <TreeRow $indent={0}>
                <Expander aria-label="Collapse" /><Folder />
                <TreeLabel $kind="root">Free Documents</TreeLabel>
              </TreeRow>
              <TreeRow $indent={15}>
                <Expander aria-label="Collapse" /><Folder />
                <TreeLabel>Source Documents<Spring /><TreeCell /><TreeCell /></TreeLabel>
              </TreeRow>
              <TreeRow $indent={45}>
                <Sheet /><TreeLabel>2021-03-26.SchDoc<Spring /><TreeCell /><TreeCell /></TreeLabel>
              </TreeRow>
              <TreeRow $indent={43}>
                <Lib /><TreeLabel>Schlib1.SchLib<Spring /><TreeCell /><TreeCell /></TreeLabel>
              </TreeRow>
              <TreeRow $indent={45}>
                <Sheet /><TreeLabel $kind="selected">Sheet1.SchDoc *</TreeLabel>
              </TreeRow>
            </Tree>
            <PanelTabs>
              {panelTabs.map(({ name, w, active }) => (
                <SlantTab key={name} $w={w} $active={active} $size={active ? 15 : 13}>
                  <Svg w={w} h={20}>
                    {!active && <path d={`M1 .5H${w - 1}L${w - 9} 19.500H10z`} fill="#f2f2f2" stroke="#707070" />}
                  </Svg>
                  <span>{name}</span>
                </SlantTab>
              ))}
            </PanelTabs>
          </Panel>

          <WiringBar>
            <Grip $wide />
            {wiring.map((name) => <Wiring key={name} name={name} />)}
          </WiringBar>

          <Documents>
            <DocTabs>
              <DocTab><Sheet />2021-03-26.SchDoc</DocTab>
              <DocTab $active><Sheet />Sheet1.SchDoc *</DocTab>
              <DocTab><Lib />Schlib1.SchLib</DocTab>
            </DocTabs>
            <CanvasRow>
              <Schematic />
              <ScrollBar>
                <Arrow dir="up" /><Spring $grow={147} /><Thumb $grow={248} /><Spring $grow={297} /><Arrow dir="down" />
              </ScrollBar>
            </CanvasRow>
            <ScrollBar $horizontal>
              <Arrow dir="left" /><Spring $grow={228} /><Thumb $horizontal $grow={367} /><Spring $grow={453} /><Arrow dir="right" />
            </ScrollBar>
            <EditorRow>
              <SlantTab $w={66} $active $size={14}>
                <Svg w={66} h={24}><path d="M1 0l6 22.500h52L65 0" fill="#fff" stroke="#555" /></Svg>
                <span>Editor</span>
              </SlantTab>
              <Spring />
              <MaskButton $w={40} aria-label="Highlight">{icons.pencil}</MaskButton>
              <MaskButton $w={42} aria-label="Filter">{icons.mask}</MaskButton>
              <MaskButton $w={81}>遮盖等级</MaskButton>
              <MaskButton $w={43}>清除</MaskButton>
            </EditorRow>
          </Documents>

          <SideStrip><SideTab>库...</SideTab></SideStrip>
        </Body>

        <StatusBar>
          <StatusText>X:480 Y:510</StatusText>
          <StatusText>Grid:10</StatusText>
          <Spring $grow={332} />
          <StatusRule $gap={0} />
          <Spring $grow={487} />
          <StatusRule $gap={50} />
          {statusButtons.map(([a, key, b, w]) => (
            <StatusButton key={b} $w={w}>{a}<u>{key}</u>{b}</StatusButton>
          ))}
          <StatusButton $w={113}>OpenBus调色板</StatusButton>
          <StatusButton $w={22} $apart>&gt;&gt;</StatusButton>
        </StatusBar>
        <Watermark>https://blog.csdn.net/qq_43035848</Watermark>
      </Window>

      <Behind>
        <BehindTop />
        <BehindButton>在</BehindButton>
        <BehindTool>
          <Svg w={16} h={24}><path d="M4 2v8h10M4 12v8h10M4 2h10" stroke="#222" strokeWidth="2" /></Svg>
          模
        </BehindTool>
        <BehindLink href="#" $h={36}>么</BehindLink>
        <BehindLink href="#" $h={36}>na</BehindLink>
        <BehindLink href="#" $h={36}>插</BehindLink>
        <BehindLink href="#" $h={78} />
        <BehindLink href="#" $h={28} $bold>捷</BehindLink>
        {Array.from({ length: 13 }, (_, i) => (
          <BehindLink key={i} href="#" $h={26}>tr</BehindLink>
        ))}
      </Behind>
      <DesktopFoot><FootImage /></DesktopFoot>
    </Desktop>
  );
}
